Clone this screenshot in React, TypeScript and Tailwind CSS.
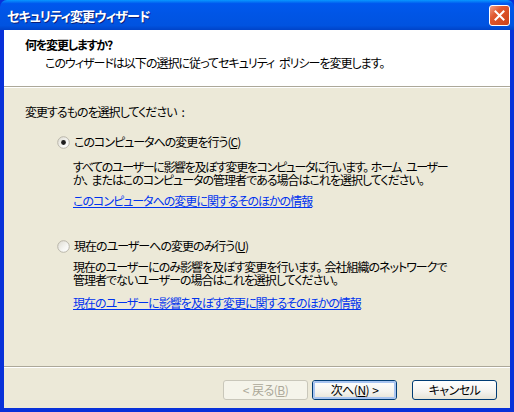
import React from "react";

const font = "[font-family:'Noto_Sans_CJK_JP',sans-serif] [font-feature-settings:'palt']";

function Sp({ w = 5 }: { w?: number }) {
  return <span className={w === 5 ? "inline-block w-[5px]" : "inline-block w-[3px]"} />;
}

function Radio({ checked }: { checked: boolean }) {
  return (
    <svg width="13" height="13" viewBox="0 0 13 13" className="shrink-0">
      <defs>
        <linearGradient id={checked ? "rg1" : "rg2"} x1="0" y1="0" x2="1" y2="1">
          <stop offset="0" stopColor="#dcdad0" />
          <stop offset="0.6" stopColor="#f6f6f3" />
          <stop offset="1" stopColor="#ffffff" />
        </linearGradient>
      </defs>
      <circle cx="6.5" cy="6.5" r="5.8" fill={`url(#${checked ? "rg1" : "rg2"})`} stroke="#b9b6aa" strokeWidth="1" />
      {checked && <circle cx="6.5" cy="6.5" r="2.4" fill="#1e1e1e" />}
    </svg>
  );
}

function Btn({ children, disabled, def }: { children: React.ReactNode; disabled?: boolean; def?: boolean }) {
  if (disabled) {
    return (
      <div className="w-[85px] h-[20px] rounded-[3px] border border-[#c9c7ba] bg-[#f5f4ea] flex items-center justify-center text-[12px] text-[#aca899] tracking-[-0.5px]">
        {children}
      </div>
    );
  }
  return (
    <div className="w-[85px] h-[20px] rounded-[3px] border border-[#003c74] bg-[linear-gradient(180deg,#ffffff_0%,#f4f3ee_60%,#e6e3d6_100%)] flex items-center justify-center text-[12px] text-black relative tracking-[-0.5px]">
      {def && (
        <div className="absolute inset-0 rounded-[2px] border-2 border-[#a8c4f0] pointer-events-none" />
      )}
      <span className="relative">{children}</span>
    </div>
  );
}

export default function App() {
  return (
    <div className={`w-[514px] h-[412px] flex flex-col bg-[#0831d9] ${font} text-[12px] text-black overflow-hidden`}>
      {/* Title bar */}
      <div className="h-[30px] shrink-0 flex items-center justify-between pl-[7px] pr-[4px] rounded-t-[7px] bg-[linear-gradient(180deg,#0997ff_0%,#0058ee_12%,#0055e5_50%,#0053e0_85%,#0043c8_100%)]">
        <span className="text-white font-bold text-[13px] leading-none [text-shadow:1px_1px_0_#0a1e7a] tracking-[-0.9px]">
          セキュリティ変更ウィザード
        </span>
        <div className="w-[21px] h-[21px] rounded-[3px] border border-white bg-[linear-gradient(135deg,#f0a08a_0%,#e0582f_35%,#cc4218_100%)] flex items-center justify-center">
          <svg width="11" height="11" viewBox="0 0 11 11">
            <path d="M1.5 1.5 L9.5 9.5 M9.5 1.5 L1.5 9.5" stroke="white" strokeWidth="2" strokeLinecap="square" />
          </svg>
        </div>
      </div>
      {/* Frame */}
      <div className="flex-1 flex flex-col mx-[4px] mb-[4px] bg-[#ece9d8] tracking-[-1px]">
        {/* Header */}
        <div className="h-[56px] shrink-0 bg-white pl-[21px] pt-[8px]">
          <div className="font-bold text-[12px] leading-[14px] whitespace-nowrap tracking-[-1.2px]">何を変更しますか?</div>
          <div className="pl-[20px] pt-[4px] leading-[14px] whitespace-nowrap">
            このウィザードは以下の選択に従ってセキュリティ<Sp />ポリシーを変更します。
          </div>
        </div>
        <div className="h-px bg-[#aca899]" />
        <div className="h-px bg-white" />
        {/* Body */}
        <div className="flex-1 pl-[21px] pt-[17px]">
          <div className="leading-[14px] whitespace-nowrap">変更するものを選択してください<Sp />:</div>
          <div className="pl-[32px] pt-[16px] flex flex-col">
            <div className="flex items-center gap-[4px] h-[14px]">
              <Radio checked />
              <span className="leading-[14px] whitespace-nowrap">
                このコンピュータへの変更を行う(<span className="underline">C</span>)
              </span>
            </div>
            <div className="pl-[16px] pt-[11px] leading-[13px] whitespace-nowrap">
              <div className="tracking-[-1.35px]">すべてのユーザーに影響を及ぼす変更をコンピュータに行います。<Sp w={3} />ホーム<Sp />ユーザー</div>
              <div>か、<Sp w={3} />またはこのコンピュータの管理者である場合はこれを選択してください。</div>
            </div>
            <div className="pl-[16px] pt-[8px] leading-[14px] whitespace-nowrap">
              <span className="text-[#0033ee] underline">このコンピュータへの変更に関するそのほかの情報</span>
            </div>
            <div className="flex items-center gap-[4px] h-[14px] mt-[31px]">
              <Radio checked={false} />
              <span className="leading-[14px] whitespace-nowrap">
                現在のユーザーへの変更のみ行う(<span className="underline">U</span>)
              </span>
            </div>
            <div className="pl-[16px] pt-[7px] leading-[13px] whitespace-nowrap">
              <div>現在のユーザーにのみ影響を及ぼす変更を行います。<Sp w={3} />会社組織のネットワークで</div>
              <div>管理者でないユーザーの場合はこれを選択してください。</div>
            </div>
            <div className="pl-[16px] pt-[10px] leading-[14px] whitespace-nowrap">
              <span className="text-[#0033ee] underline">現在のユーザーに影響を及ぼす変更に関するそのほかの情報</span>
            </div>
          </div>
        </div>
        <div className="h-px bg-[#aca899]" />
        <div className="h-px bg-white" />
        {/* Buttons */}
        <div className="h-[40px] shrink-0 flex items-start justify-end pt-[12px] pr-[13px]">
          <Btn disabled>&lt;<Sp w={3} />戻る(<span className="underline">B</span>)</Btn>
          <div className="w-[4px]" />
          <Btn def>次へ(<span className="underline">N</span>)<Sp w={3} />&gt;</Btn>
          <div className="w-[15px]" />
          <Btn>キャンセル</Btn>
        </div>
      </div>
    </div>
  );
}
